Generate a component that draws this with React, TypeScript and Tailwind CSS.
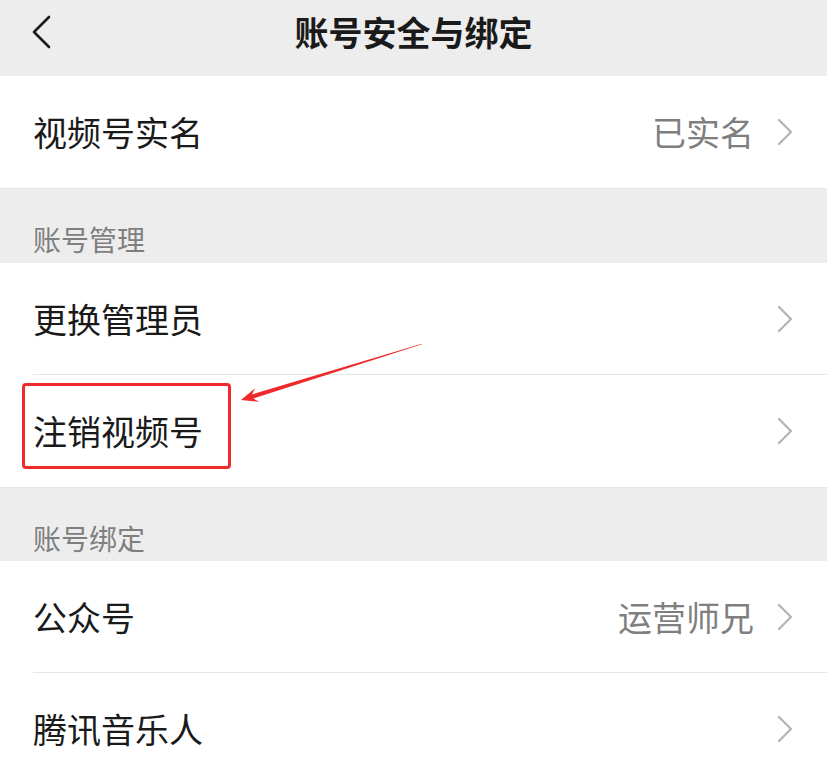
import React from 'react';

type Row = { label: string; value?: string };

const font = { fontFamily: '"Noto Sans CJK SC", "Noto Sans", sans-serif' };

const Chevron: React.FC = () => (
  <svg width="16" height="28" viewBox="0 0 16 28" className="shrink-0">
    <path d="M2 2 L14 14 L2 26" fill="none" stroke="#b3b3b3" strokeWidth="2.2" strokeLinecap="round" strokeLinejoin="round" />
  </svg>
);

const ListRow: React.FC<{ row: Row; divider?: boolean }> = ({ row, divider }) => (
  <div className="bg-white">
    <div className={`${divider ? 'h-[111px]' : 'h-[112px]'} flex items-center pl-[33px] pr-[34px]`}>
      <span className="flex-1 text-[34px] leading-none text-[#1a1a1a]">{row.label}</span>
      {row.value && <span className="text-[34px] leading-none text-[#7f7f7f] mr-[23px]">{row.value}</span>}
      {!row.value && <span className="mr-[23px]" />}
      <Chevron />
    </div>
    {divider && <div className="ml-[33px] h-px bg-[#e5e5e5]" />}
  </div>
);

const SectionLabel: React.FC<{ text: string; short?: boolean }> = ({ text, short }) => (
  <div className={`${short ? 'h-[74px]' : 'h-[75px]'} pt-[36px] pl-[33px] border-t border-[#e5e5e5]`}>
    <div className="text-[28px] leading-[28px] text-[#7f7f7f]">{text}</div>
  </div>
);

const App: React.FC = () => {
  return (
    <div className="relative w-[827px] h-[765px] overflow-hidden bg-[#ededed] select-none" style={font}>
      {/* Nav bar */}
      <div className="h-[76px] flex items-center pb-[12px]">
        <div className="w-[76px] pl-[28px] flex items-center">
          <svg width="28" height="36" viewBox="0 0 28 36">
            <path d="M21 3 L6 18 L21 33" fill="none" stroke="#1a1a1a" strokeWidth="2.6" strokeLinecap="round" strokeLinejoin="round" />
          </svg>
        </div>
        <h1 className="flex-1 text-center text-[34px] font-semibold text-[#1a1a1a] leading-none pr-[76px]">账号安全与绑定</h1>
      </div>

      <ListRow row={{ label: '视频号实名', value: '已实名' }} />

      <SectionLabel text="账号管理" />
      <ListRow row={{ label: '更换管理员' }} divider />
      <ListRow row={{ label: '注销视频号' }} />

      <SectionLabel text="账号绑定" short />
      <ListRow row={{ label: '公众号', value: '运营师兄' }} divider />
      <ListRow row={{ label: '腾讯音乐人' }} />

      {/* annotation: red box + arrow */}
      <div className="absolute left-[22px] top-[383px] w-[209px] h-[86px] border-[3px] border-[#ee2a2a] rounded-[4px] pointer-events-none" />
      <svg className="absolute left-0 top-0 pointer-events-none" width="827" height="765" viewBox="0 0 827 765">
        <polygon
          points="421.9,343.7 251.9,394.4 255.1,388.3 241,400 259.3,401.7 253.2,398.6 422.1,344.3"
          fill="#ee2a2a"
        />
      </svg>
    </div>
  );
};

export default App;
